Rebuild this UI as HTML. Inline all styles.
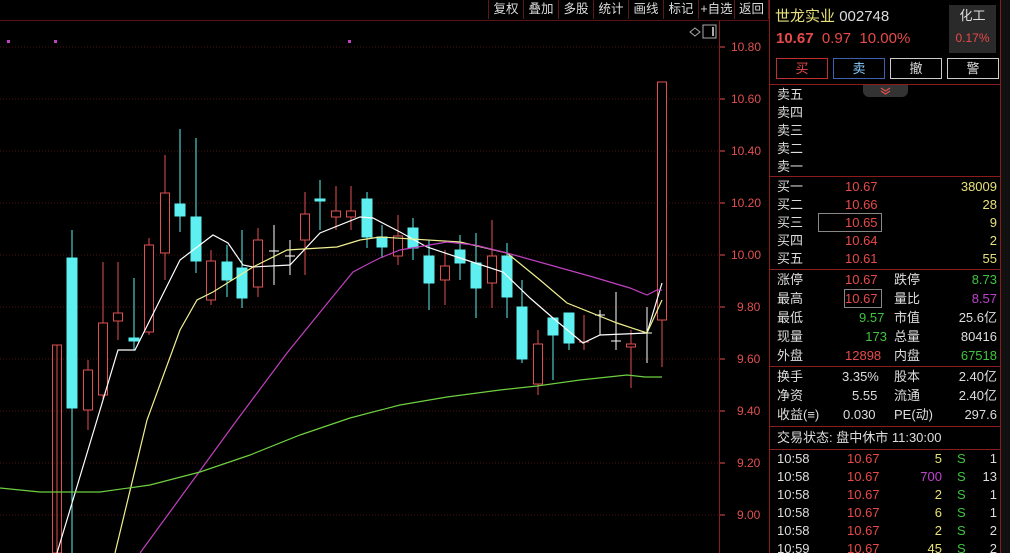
<!DOCTYPE html>
<html><head><meta charset="utf-8"><style>
*{margin:0;padding:0;box-sizing:border-box}
html,body{width:1010px;height:553px;overflow:hidden}
body{background:#000;position:relative;font-family:"Liberation Sans","Noto Sans CJK SC",sans-serif;color:#ddd;font-size:13px}
#wrap{position:absolute;left:0;top:0;width:1010px;height:553px;overflow:hidden}
.a{position:absolute;white-space:nowrap}
.r{color:#e84a4a}.g{color:#3ec43e}.y{color:#e8e07a}.w{color:#ddd}.m{color:#c040d0}
.tb{position:absolute;top:0;height:19px;font-size:12.5px;color:#ddd;border-right:1px solid #5a1a1a;text-align:center;line-height:19px}
.row{position:absolute;left:777px;width:222px;height:18px;line-height:18px;font-size:13px}
.row span{position:absolute}
</style></head><body><div id="wrap">
<svg class="a" style="left:0;top:0" width="770" height="553">
<g stroke="#4a1010" stroke-dasharray="1,2">
<line x1="0" y1="47" x2="718" y2="47"/><line x1="0" y1="99" x2="718" y2="99"/><line x1="0" y1="151" x2="718" y2="151"/><line x1="0" y1="203" x2="718" y2="203"/><line x1="0" y1="255" x2="718" y2="255"/><line x1="0" y1="307" x2="718" y2="307"/><line x1="0" y1="359" x2="718" y2="359"/><line x1="0" y1="411" x2="718" y2="411"/><line x1="0" y1="463" x2="718" y2="463"/><line x1="0" y1="515" x2="718" y2="515"/>
</g>
<line x1="719.5" y1="20" x2="719.5" y2="553" stroke="#8a1c1c"/>
<line x1="0" y1="20.5" x2="770" y2="20.5" stroke="#5a1414"/>
<g stroke="#e05050" fill="none">
<line x1="57" y1="345" x2="57" y2="553"/><rect x="52.5" y="345" width="9" height="208"/>
<line x1="88" y1="360" x2="88" y2="430"/><rect x="83.5" y="370" width="9" height="40" fill="#000"/>
<line x1="103" y1="262" x2="103" y2="400"/><rect x="98.5" y="323" width="9" height="72" fill="#000"/>
<line x1="118" y1="262" x2="118" y2="340"/><rect x="113.5" y="313" width="9" height="8" fill="#000"/>
<line x1="149" y1="238" x2="149" y2="335"/><rect x="144.5" y="245" width="9" height="87" fill="#000"/>
<line x1="165" y1="155" x2="165" y2="280"/><rect x="160.5" y="193" width="9" height="60" fill="#000"/>
<line x1="211" y1="250" x2="211" y2="305"/><rect x="206.5" y="261" width="9" height="39" fill="#000"/>
<line x1="258" y1="228" x2="258" y2="297"/><rect x="253.5" y="240" width="9" height="47" fill="#000"/>
<line x1="305" y1="192" x2="305" y2="275"/><rect x="300.5" y="214" width="9" height="26" fill="#000"/>
<line x1="336" y1="186" x2="336" y2="230"/><rect x="331.5" y="211" width="9" height="6" fill="#000"/>
<line x1="351" y1="186" x2="351" y2="230"/><rect x="346.5" y="211" width="9" height="6" fill="#000"/>
<line x1="398" y1="215" x2="398" y2="265"/><rect x="393.5" y="236" width="9" height="20" fill="#000"/>
<line x1="445" y1="250" x2="445" y2="305"/><rect x="440.5" y="266" width="9" height="14" fill="#000"/>
<line x1="492" y1="220" x2="492" y2="308"/><rect x="487.5" y="256" width="9" height="27" fill="#000"/>
<line x1="538" y1="330" x2="538" y2="395"/><rect x="533.5" y="344" width="9" height="40" fill="#000"/>
<line x1="584" y1="315" x2="584" y2="350"/><line x1="579" y1="342" x2="589" y2="342"/>
<line x1="631" y1="330" x2="631" y2="388"/><rect x="626.5" y="344" width="9" height="3" fill="#000"/>
<line x1="662" y1="320" x2="662" y2="367"/><rect x="657.5" y="82" width="9" height="238" fill="#000"/>
</g>
<g stroke="#5ef0f0" fill="#5ef0f0">
<line x1="72" y1="230" x2="72" y2="553"/><rect x="67" y="258" width="10" height="150"/>
<line x1="134" y1="278" x2="134" y2="350"/><rect x="129" y="338" width="10" height="3"/>
<line x1="180" y1="129" x2="180" y2="232"/><rect x="175" y="204" width="10" height="12"/>
<line x1="196" y1="138" x2="196" y2="273"/><rect x="191" y="217" width="10" height="44"/>
<line x1="227" y1="245" x2="227" y2="297"/><rect x="222" y="262" width="10" height="18"/>
<line x1="242" y1="230" x2="242" y2="308"/><rect x="237" y="268" width="10" height="30"/>
<line x1="320" y1="180" x2="320" y2="230"/><rect x="315" y="199" width="10" height="2"/>
<line x1="367" y1="192" x2="367" y2="248"/><rect x="362" y="199" width="10" height="38"/>
<line x1="382" y1="225" x2="382" y2="258"/><rect x="377" y="237" width="10" height="10"/>
<line x1="413" y1="218" x2="413" y2="260"/><rect x="408" y="228" width="10" height="20"/>
<line x1="429" y1="240" x2="429" y2="310"/><rect x="424" y="256" width="10" height="27"/>
<line x1="460" y1="235" x2="460" y2="280"/><rect x="455" y="250" width="10" height="13"/>
<line x1="476" y1="233" x2="476" y2="318"/><rect x="471" y="263" width="10" height="25"/>
<line x1="507" y1="243" x2="507" y2="318"/><rect x="502" y="256" width="10" height="41"/>
<line x1="522" y1="280" x2="522" y2="363"/><rect x="517" y="307" width="10" height="52"/>
<line x1="553" y1="318" x2="553" y2="380"/><rect x="548" y="318" width="10" height="17"/>
<line x1="569" y1="313" x2="569" y2="350"/><rect x="564" y="313" width="10" height="30"/>
</g>
<g stroke="#fff">
<line x1="274" y1="225" x2="274" y2="285"/><line x1="269" y1="251" x2="279" y2="251"/>
<line x1="290" y1="240" x2="290" y2="275"/><line x1="285" y1="256" x2="295" y2="256"/>
<line x1="600" y1="310" x2="600" y2="335"/><line x1="595" y1="315" x2="605" y2="315"/>
<line x1="616" y1="292" x2="616" y2="350"/><line x1="611" y1="341" x2="621" y2="341"/>
<line x1="647" y1="307" x2="647" y2="363"/><line x1="642" y1="333" x2="652" y2="333"/>
</g>
<g fill="none" stroke-width="1.2">
<polyline stroke="#fff" points="57,553 97,420 118,350 135,350 180,260 213,235 228,243 243,265 253,267 290,265 320,233 360,217 373,218 400,232 427,247 460,258 503,272 530,298 553,318 583,343 600,335 647,333 662,283"/>
<polyline stroke="#f0f090" points="115,553 147,420 180,330 197,300 213,292 253,267 287,250 337,247 360,240 380,237 460,242 507,253 540,280 567,303 617,323 647,333 662,300"/>
<polyline stroke="#c040c0" points="140,553 237,420 287,353 330,300 353,272 370,263 380,258 400,250 447,242 475,245 507,253 550,265 593,277 630,288 647,295 657,290 662,290"/>
<polyline stroke="#6ed040" points="0,488 40,492 100,492 150,485 200,472 250,455 300,435 350,418 400,405 447,397 500,390 537,386 580,380 627,375 645,377 662,377"/>
</g>
<g fill="#c040c0"><rect x="7" y="40" width="3" height="3"/><rect x="54" y="40" width="3" height="3"/><rect x="348" y="40" width="3" height="3"/></g>
<path d="M690 32l5-4 5 4-5 4z" fill="none" stroke="#aaa"/>
<rect x="703" y="25" width="13" height="13" fill="none" stroke="#aaa"/><line x1="713" y1="27" x2="713" y2="36" stroke="#aaa" stroke-width="2"/>
<g fill="#e05050" font-size="12" font-family="Liberation Sans">
<text x="731" y="51">10.80</text><text x="731" y="103">10.60</text><text x="731" y="155">10.40</text><text x="731" y="207">10.20</text><text x="731" y="259">10.00</text><text x="737" y="311">9.80</text><text x="737" y="363">9.60</text><text x="737" y="415">9.40</text><text x="737" y="467">9.20</text><text x="737" y="519">9.00</text>
</g>
<g stroke="#e05050"><line x1="720" y1="47" x2="725" y2="47"/><line x1="720" y1="99" x2="725" y2="99"/><line x1="720" y1="151" x2="725" y2="151"/><line x1="720" y1="203" x2="725" y2="203"/><line x1="720" y1="255" x2="725" y2="255"/><line x1="720" y1="307" x2="725" y2="307"/><line x1="720" y1="359" x2="725" y2="359"/><line x1="720" y1="411" x2="725" y2="411"/><line x1="720" y1="463" x2="725" y2="463"/><line x1="720" y1="515" x2="725" y2="515"/></g>
</svg>
<div class="tb" style="left:488px;width:36px;border-left:1px solid #5a1a1a">复权</div>
<div class="tb" style="left:524px;width:35px">叠加</div>
<div class="tb" style="left:559px;width:35px">多股</div>
<div class="tb" style="left:594px;width:35px">统计</div>
<div class="tb" style="left:629px;width:35px">画线</div>
<div class="tb" style="left:664px;width:35px">标记</div>
<div class="tb" style="left:699px;width:36px">+自选</div>
<div class="tb" style="left:735px;width:34px">返回</div>
<div class="a" style="left:769px;top:0;width:1px;height:553px;background:#8a1c1c"></div>
<div class="a" style="left:1000px;top:0;width:1px;height:553px;background:#8a1c1c"></div>
<div class="a" style="left:1001px;top:0;width:9px;height:553px;background:#111"></div>
<div class="a" style="left:775px;top:5px;font-size:15px"><span class="y">世龙实业</span> <span class="w">002748</span></div>
<div class="a r" style="left:776px;top:30px;font-size:15px"><b>10.67</b> &nbsp;0.97 &nbsp;10.00%</div>
<div class="a" style="left:949px;top:5px;width:47px;height:48px;background:#2a2a2a;text-align:center;font-size:13px;line-height:22px">化工<br><span class="r" style="font-size:12px">0.17%</span></div>
<div class="a r" style="left:776px;top:58px;width:52px;height:21px;border:1px solid #c03030;text-align:center;line-height:19px">买</div>
<div class="a" style="left:833px;top:58px;width:52px;height:21px;border:1px solid #4060b0;text-align:center;line-height:19px;color:#8cf">卖</div>
<div class="a" style="left:890px;top:58px;width:52px;height:21px;border:1px solid #ccc;text-align:center;line-height:19px">撤</div>
<div class="a" style="left:947px;top:58px;width:52px;height:21px;border:1px solid #ccc;text-align:center;line-height:19px">警</div>
<div class="a" style="left:770px;top:84px;width:230px;height:1px;background:#8a1c1c"></div>
<div class="a" style="left:863px;top:85px;width:45px;height:12px;background:#333;border-radius:0 0 6px 6px"><svg width="45" height="12" style="position:absolute;left:0;top:0"><path d="M18 3l4.5 3 4.5-3M18 6l4.5 3 4.5-3" fill="none" stroke="#e05050" stroke-width="1.2"/></svg></div>
<div class="row" style="top:86px">卖五</div><div class="row" style="top:104px">卖四</div><div class="row" style="top:122px">卖三</div><div class="row" style="top:140px">卖二</div><div class="row" style="top:158px">卖一</div>
<div class="a" style="left:770px;top:176px;width:230px;height:1px;background:#8a1c1c"></div>
<div class="row" style="top:178px">买一<span class="r" style="left:68px">10.67</span><span class="y" style="right:2px">38009</span></div>
<div class="row" style="top:196px">买二<span class="r" style="left:68px">10.66</span><span class="y" style="right:2px">28</span></div>
<div class="row" style="top:214px">买三<span class="r" style="left:68px">10.65</span><span class="y" style="right:2px">9</span></div>
<div class="a" style="left:818px;top:213px;width:64px;height:19px;border:1px solid #888"></div>
<div class="row" style="top:232px">买四<span class="r" style="left:68px">10.64</span><span class="y" style="right:2px">2</span></div>
<div class="row" style="top:250px">买五<span class="r" style="left:68px">10.61</span><span class="y" style="right:2px">55</span></div>
<div class="a" style="left:770px;top:269px;width:230px;height:1px;background:#8a1c1c"></div>
<div class="row" style="top:271px">涨停<span class="r" style="left:68px">10.67</span><span style="left:117px">跌停</span><span class="g" style="right:2px">8.73</span></div>
<div class="row" style="top:290px">最高<span class="r" style="left:68px">10.67</span><span style="left:117px">量比</span><span class="m" style="right:2px">8.57</span></div>
<div class="a" style="left:844px;top:289px;width:38px;height:19px;border:1px solid #888"></div>
<div class="row" style="top:309px">最低<span class="g" style="left:82px">9.57</span><span style="left:117px">市值</span><span style="right:2px">25.6亿</span></div>
<div class="row" style="top:328px">现量<span class="g" style="left:82px;width:28px;text-align:right">173</span><span style="left:117px">总量</span><span style="right:2px">80416</span></div>
<div class="row" style="top:347px">外盘<span class="r" style="left:68px">12898</span><span style="left:117px">内盘</span><span class="g" style="right:2px">67518</span></div>
<div class="a" style="left:770px;top:366px;width:230px;height:1px;background:#8a1c1c"></div>
<div class="row" style="top:368px">换手<span style="left:65px">3.35%</span><span style="left:117px">股本</span><span style="right:2px">2.40亿</span></div>
<div class="row" style="top:387px">净资<span style="left:75px">5.55</span><span style="left:117px">流通</span><span style="right:2px">2.40亿</span></div>
<div class="row" style="top:406px">收益(≡)<span style="left:66px">0.030</span><span style="left:117px">PE(动)</span><span style="right:2px">297.6</span></div>
<div class="a" style="left:770px;top:426px;width:230px;height:1px;background:#8a1c1c"></div>
<div class="row" style="top:429px">交易状态: 盘中休市 11:30:00</div>
<div class="a" style="left:770px;top:449px;width:230px;height:1px;background:#8a1c1c"></div>
<div class="row" style="top:450px">10:58<span class="r" style="left:70px">10.67</span><span class="y" style="left:130px;width:35px;text-align:right">5</span><span class="g" style="left:180px">S</span><span style="right:2px">1</span></div>
<div class="row" style="top:468px">10:58<span class="r" style="left:70px">10.67</span><span class="m" style="left:130px;width:35px;text-align:right">700</span><span class="g" style="left:180px">S</span><span style="right:2px">13</span></div>
<div class="row" style="top:486px">10:58<span class="r" style="left:70px">10.67</span><span class="y" style="left:130px;width:35px;text-align:right">2</span><span class="g" style="left:180px">S</span><span style="right:2px">1</span></div>
<div class="row" style="top:504px">10:58<span class="r" style="left:70px">10.67</span><span class="y" style="left:130px;width:35px;text-align:right">6</span><span class="g" style="left:180px">S</span><span style="right:2px">1</span></div>
<div class="row" style="top:522px">10:58<span class="r" style="left:70px">10.67</span><span class="y" style="left:130px;width:35px;text-align:right">2</span><span class="g" style="left:180px">S</span><span style="right:2px">2</span></div>
<div class="row" style="top:540px;height:13px;overflow:hidden">10:59<span class="r" style="left:70px">10.67</span><span class="y" style="left:130px;width:35px;text-align:right">45</span><span class="g" style="left:180px">S</span><span style="right:2px">2</span></div>
</div></body></html>
